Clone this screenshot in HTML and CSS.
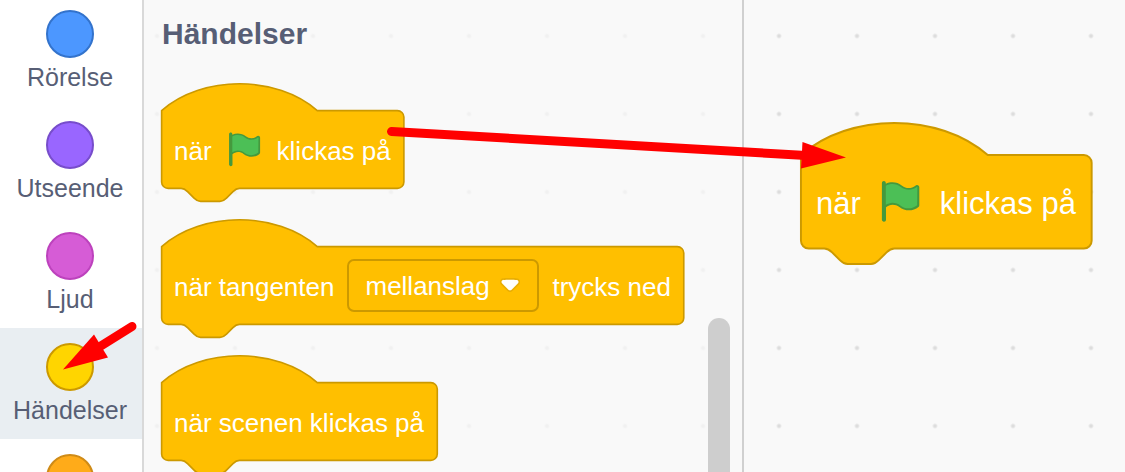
FILE: index.html
```html
<!DOCTYPE html>
<html lang="sv">
<head>
<meta charset="utf-8">
<title>Händelser</title>
<link rel="stylesheet" href="styles.css">
</head>
<body>
<svg class="defs" aria-hidden="true">
  <symbol id="flag" viewBox="0 0 24 24">
    <path fill="#45993d" d="M20.8,3.7c-0.4-0.2-0.9-0.1-1.2,0.2c-2,1.6-4.8,1.6-6.8,0c-2.3-1.9-5.6-2.3-8.3-1v-0.4c0-0.6-0.5-1-1-1s-1,0.4-1,1v18.8c0,0.5,0.5,1,1,1h0.1c0.5,0,1-0.4,1-1v-6.4c1-0.7,2.1-1.2,3.4-1.3c1.2,0,2.4,0.4,3.4,1.2c2.9,2.3,7,2.3,9.8,0c0.3-0.2,0.4-0.5,0.4-0.9V4.7C21.6,4.2,21.3,3.8,20.8,3.7z"/>
    <path fill="#4cbf56" d="M20.5,13.9C18,16,14.4,16,11.9,14c-1.1-0.9-2.5-1.4-4-1.4c-1.2,0.1-2.3,0.5-3.4,1.1V4c2.5-1.4,5.5-1.1,7.7,0.6c2.4,1.9,5.7,1.9,8.1,0h0.2c0.1,0,0.1,0,0.1,0.1L20.5,13.9z"/>
  </symbol>
</svg>
<main class="app">
  <nav class="categories" aria-label="Kategorier">
    <button class="category" type="button"><span class="dot motion"></span>Rörelse</button>
    <button class="category" type="button"><span class="dot looks"></span>Utseende</button>
    <button class="category" type="button"><span class="dot sound"></span>Ljud</button>
    <button class="category selected" type="button"><span class="dot events"></span>Händelser</button>
    <button class="category" type="button" aria-label="Kontroll"><span class="dot control"></span></button>
  </nav>

  <section class="flyout">
    <div class="palette">
      <h1 class="heading">Händelser</h1>
      <div class="block">
        <svg class="shape" viewBox="-1 -17 151.4 74" aria-hidden="true"><path d="M0,0c25,-22 71,-22 96,0H145.4a4,4 0 0,1 4,4v40a4,4 0 0,1 -4,4H48c-2,0 -3,1 -4,2l-4,4c-1,1 -2,2 -4,2h-12c-2,0 -3,-1 -4,-2l-4,-4c-1,-1 -2,-2 -4,-2H4a4,4 0 0,1 -4,-4z"/></svg>
        <div class="row"><span class="text">när</span><svg class="flag" role="img" aria-label="grön flagga"><use href="#flag"/></svg><span class="text">klickas på</span></div>
      </div>
      <div class="block">
        <svg class="shape" viewBox="-1 -17 324 74" aria-hidden="true"><path d="M0,0c25,-22 71,-22 96,0H318a4,4 0 0,1 4,4v40a4,4 0 0,1 -4,4H48c-2,0 -3,1 -4,2l-4,4c-1,1 -2,2 -4,2h-12c-2,0 -3,-1 -4,-2l-4,-4c-1,-1 -2,-2 -4,-2H4a4,4 0 0,1 -4,-4z"/></svg>
        <div class="row">
          <label class="text" for="key">när tangenten</label>
          <div class="field">
            <select class="key" id="key"><option>mellanslag</option></select>
            <svg class="arrow" viewBox="0 0 12.71 8.79" aria-hidden="true">
              <path fill="#231f20" opacity="0.1" d="M12.71,2.44A2.41,2.41,0,0,1,12,4.16L8.08,8.08a2.45,2.45,0,0,1-3.45,0L0.72,4.16A2.42,2.42,0,0,1,0,2.44,2.48,2.48,0,0,1,.71.71C1,0.47,1.43,0,6.36,0S11.75,0.46,12,.71A2.44,2.44,0,0,1,12.71,2.44Z"/>
              <path fill="#fff" d="M6.36,7.79a1.43,1.43,0,0,1-1-.42L1.42,3.45a1.44,1.44,0,0,1,0-2c0.56-.56,9.31-0.56,9.87,0a1.44,1.44,0,0,1,0,2L7.37,7.37A1.43,1.43,0,0,1,6.36,7.79Z"/>
            </svg>
          </div>
          <span class="text">trycks ned</span>
        </div>
      </div>
      <div class="block">
        <svg class="shape" viewBox="-1 -17 172 74" aria-hidden="true"><path d="M0,0c25,-22 71,-22 96,0H166a4,4 0 0,1 4,4v40a4,4 0 0,1 -4,4H48c-2,0 -3,1 -4,2l-4,4c-1,1 -2,2 -4,2h-12c-2,0 -3,-1 -4,-2l-4,-4c-1,-1 -2,-2 -4,-2H4a4,4 0 0,1 -4,-4z"/></svg>
        <div class="row"><span class="text">när scenen klickas på</span></div>
      </div>
    </div>
    <div class="scrollbar"></div>
  </section>

  <section class="workspace">
    <div class="block placed">
      <svg class="shape" viewBox="-1 -17 151.4 74" aria-hidden="true"><path d="M0,0c25,-22 71,-22 96,0H145.4a4,4 0 0,1 4,4v40a4,4 0 0,1 -4,4H48c-2,0 -3,1 -4,2l-4,4c-1,1 -2,2 -4,2h-12c-2,0 -3,-1 -4,-2l-4,-4c-1,-1 -2,-2 -4,-2H4a4,4 0 0,1 -4,-4z"/></svg>
      <div class="row"><span class="text">när</span><svg class="flag" role="img" aria-label="grön flagga"><use href="#flag"/></svg><span class="text">klickas på</span></div>
    </div>
  </section>

  <svg class="pointers" viewBox="0 0 1125 472" width="1125" height="472" aria-hidden="true">
    <path class="shaft" d="M391.5 131.5L806 155.5"/>
    <path class="head" d="M802.5 142L846 157.5L801 168.5z"/>
    <path class="shaft" d="M132 326.5L96 349"/>
    <path class="head" d="M63 369.5L94 334.5L108 357.5z"/>
  </svg>
</main>
</body>
</html>
```
FILE: styles.css
```css
* {
  box-sizing: border-box;
}

body {
  margin: 0;
  font-family: "Liberation Sans", Arial, sans-serif;
  color: #575e75;
}

.defs {
  display: none;
}

.app {
  position: relative;
  display: flex;
  height: 100vh;
  overflow: hidden;
  background: #f9f9f9;
}

.categories {
  flex: none;
  width: 144px;
  margin-top: -5px;
  border-right: 2px solid #d9d9d9;
  background: #fff;
}

.category {
  display: flex;
  flex-direction: column;
  align-items: center;
  gap: 4px;
  width: 100%;
  height: 111px;
  padding: 15px 2px 0 0;
  border: 0;
  background: none;
  color: inherit;
  font-family: inherit;
  font-size: 25px;
  line-height: 30px;
  text-align: center;
}

.category.selected {
  background: #e9eef2;
}

.dot {
  flex: none;
  width: 48px;
  height: 48px;
  border: 2px solid;
  border-radius: 50%;
}

.motion {
  background: #4c97ff;
  border-color: #3373cc;
}

.looks {
  background: #9966ff;
  border-color: #774dcb;
}

.sound {
  background: #d65cd6;
  border-color: #bd42bd;
}

.events {
  background: #ffd500;
  border-color: #cc9900;
}

.control {
  background: #ffab19;
  border-color: #cf8b17;
}

.flyout {
  display: flex;
  flex: none;
  width: 600px;
  padding-right: 12px;
  border-right: 2px solid #d0d0d0;
  background: radial-gradient(circle, #f1f1f1 1px, transparent 3px) -26px -3px / 78px 78px;
}

.palette {
  display: flex;
  flex: 1;
  flex-direction: column;
  gap: 16px;
  padding: 16px 0 0 16px;
}

.heading {
  margin: 0 0 15px 2px;
  font-size: 30px;
  line-height: 36px;
}

.scrollbar {
  width: 22px;
  margin-top: 318px;
  border-radius: 11px 11px 0 0;
  background: #cecece;
}

.workspace {
  position: relative;
  flex: 1;
  background: radial-gradient(circle, #dddddd 1px, transparent 3px) -4px -3px / 78px 78px;
}

.block {
  display: grid;
  flex: none;
  justify-items: start;
  height: 120px;
  color: #fff;
  font-size: 26px;
  white-space: nowrap;
}

.shape {
  grid-area: 1 / 1;
  height: 120px;
  fill: #ffbf00;
  stroke: #cc9900;
}

.row {
  display: flex;
  grid-area: 1 / 1;
  align-items: center;
  gap: 13px;
  height: 76px;
  margin-top: 28px;
  padding-left: 14px;
  line-height: 30px;
}

.text {
  padding-top: 4px;
}

.flag {
  width: 39px;
  height: 39px;
}

.field {
  display: grid;
  align-items: center;
}

.key {
  grid-area: 1 / 1;
  width: 192px;
  height: 53px;
  padding: 2px 16px 0;
  border: 2px solid #cc9900;
  border-radius: 7px;
  appearance: none;
  background: transparent;
  color: inherit;
  font: inherit;
}

.arrow {
  grid-area: 1 / 1;
  justify-self: end;
  width: 20px;
  height: 14px;
  margin-right: 19px;
  pointer-events: none;
}

.placed {
  position: absolute;
  top: 122px;
  left: 55px;
  height: 144px;
  font-size: 31px;
}

.placed .shape {
  height: 144px;
}

.placed .row {
  gap: 16px;
  height: 92px;
  margin-top: 33px;
  padding-left: 17px;
  line-height: 36px;
}

.placed .text {
  padding-top: 6px;
}

.placed .flag {
  width: 47px;
  height: 47px;
}

.pointers {
  position: absolute;
  top: 0;
  left: 0;
  pointer-events: none;
}

.shaft {
  stroke: #ff0000;
  stroke-width: 9;
  stroke-linecap: round;
}

.head {
  fill: #ff0000;
}
```
